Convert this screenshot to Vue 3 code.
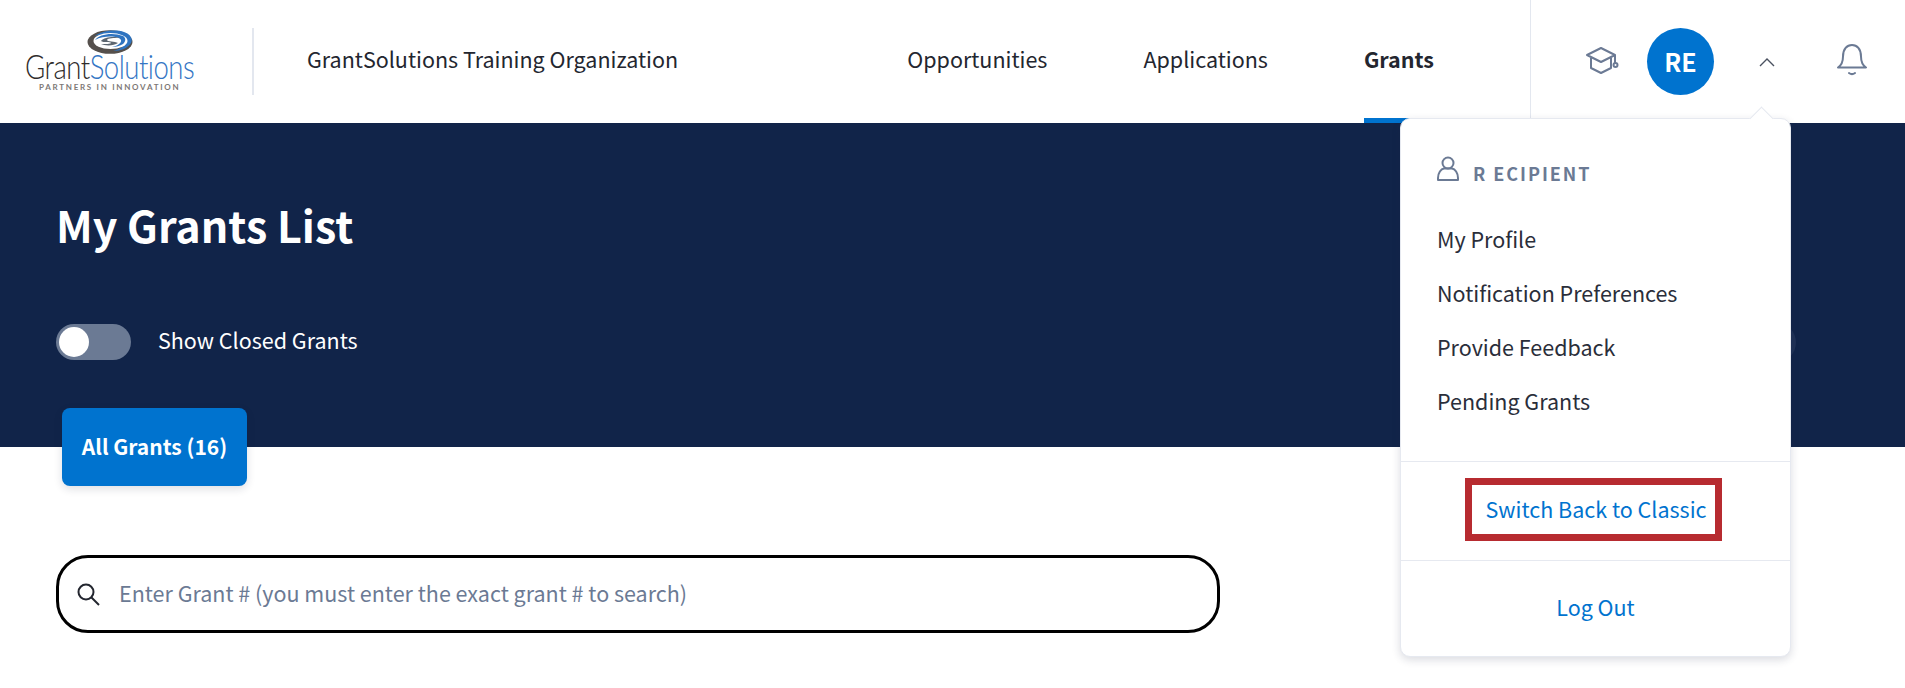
<script setup>
const navItems = [
  { label: 'Opportunities', active: false },
  { label: 'Applications', active: false },
  { label: 'Grants', active: true },
]
const menuItems = ['My Profile', 'Notification Preferences', 'Provide Feedback', 'Pending Grants']
</script>

<template>
  <div class="page">
    <header class="topbar">
      <div class="logo">
        <svg class="logo-mark" width="46" height="24" viewBox="0 0 46 24">
          <ellipse cx="23" cy="12" rx="22.500" ry="11.800" fill="#55504c" />
          <path d="M8 6C14 1 28-1 37 2c7 2.500 9 7 7 11-3 5-10 8-18 8 8-2 13-6 12-10C36 5 20 2 8 6z" fill="#2f74c0" />
          <ellipse cx="23.500" cy="11" rx="17" ry="8" fill="#fff" />
          <path d="M8 10C12 4 26 2 36 6c3 2 3 5 0 8-3 2-7 3-11 3 5-1 10-4 9-7C32 6 18 5 8 10z" fill="#2f74c0" />
          <path d="M14 11c3-4 14-5 18-3-5 0-11 0-12 2 0 2 8 1 11 3-4 3-13 3-17 1 4 0 10 0 10-1 0-2-8 0-10-2z" fill="#5c6670" />
        </svg>
        <div class="logo-word"><span class="lw-a">Grant</span><span class="lw-b">Solutions</span></div>
        <div class="logo-tag">PARTNERS IN INNOVATION</div>
      </div>
      <div class="org">GrantSolutions Training Organization</div>
      <nav class="nav">
        <a v-for="item in navItems" :key="item.label" class="nav-item" :class="{ active: item.active }">{{ item.label }}</a>
      </nav>
      <div class="tools">
        <svg class="cap" width="34" height="30" viewBox="0 0 34 30" fill="none" stroke="#6b7a94" stroke-width="2" stroke-linejoin="round">
          <path d="M2 10 16 3l14 7-14 7z" />
          <path d="M6 13v10l10 5 10-5V13" />
          <path d="M30 10v8" />
          <circle cx="30.500" cy="20" r="2" />
        </svg>
        <div class="avatar">RE</div>
        <svg class="chev" width="16" height="10" viewBox="0 0 16 10" fill="none" stroke="#4a5160" stroke-width="1.400"><path d="M1 9l7-7 7 7" /></svg>
        <svg class="bell" width="30" height="34" viewBox="0 0 30 34" fill="none" stroke="#6b7a94" stroke-width="2" stroke-linecap="round">
          <path d="M1 25.500c3-2 5-5 5-11C6 7 10 3 15 3s9 4 9 11.500c0 6 2 9 5 11z" stroke-linejoin="round" />
          <path d="M12 31c2 1.500 4 1.500 6 0" />
        </svg>
      </div>
    </header>

    <section class="hero">
      <h1 class="title">My Grants List</h1>
      <div class="toggle-row">
        <span class="switch"><span class="knob"></span></span>
        <span class="toggle-label">Show Closed Grants</span>
      </div>
      <div class="tab">All Grants (16)</div>
    </section>

    <section class="content">
      <div class="search">
        <svg width="24" height="24" viewBox="0 0 24 24" fill="none" stroke="#23262f" stroke-width="2"><circle cx="10" cy="10" r="7.500" /><path d="M15.500 15.500 23 23" /></svg>
        <span class="placeholder">Enter Grant # (you must enter the exact grant # to search)</span>
      </div>
    </section>

    <span class="ghost"></span>

    <div class="menu">
      <span class="arrow"></span>
      <div class="user">
        <svg class="user-icon" width="22" height="25" viewBox="0 0 22 25" fill="none" stroke="#6b7a94" stroke-width="2">
          <circle cx="11" cy="7" r="5.500" />
          <path d="M1 24v-2c0-5 3-9 6-9.500h8c3 .5 6 4.500 6 9.500v2z" stroke-linejoin="round" />
        </svg>
        <span class="user-name">R ECIPIENT</span>
      </div>
      <ul class="menu-list">
        <li v-for="m in menuItems" :key="m">{{ m }}</li>
      </ul>
      <div class="menu-sec classic">
        <a class="classic-link">Switch Back to Classic</a>
      </div>
      <div class="menu-sec logout"><a>Log Out</a></div>
    </div>
  </div>
</template>

<style>
html, body { margin: 0; background: #fff; }
</style>

<style scoped>
.page {
  position: relative;
  width: 1905px;
  height: 688px;
  overflow: hidden;
  font-family: "Noto Sans CJK SC", "Noto Sans", sans-serif;
  color: #23262f;
  background: #fff;
}
.topbar {
  height: 123px;
  display: flex;
  align-items: center;
}
.logo {
  position: relative;
  width: 252px;
  height: 67px;
  flex: none;
  border-right: 2px solid #e3e7ef;
}
.logo-mark { position: absolute; left: 87px; top: 2px; }
.logo-word {
  position: absolute;
  left: 25px;
  top: 25px;
  font-family: "Lato", sans-serif;
  font-weight: 300;
  font-size: 33px;
  line-height: 26px;
  letter-spacing: -.6px;
  white-space: nowrap;
  transform: scaleX(.835);
  transform-origin: left center;
}
.lw-a { color: #2f2c2b; }
.lw-b { color: #3375c4; }
.logo-tag {
  position: absolute;
  left: 39px;
  top: 54px;
  font-family: "Lato", sans-serif;
  font-weight: 700;
  font-size: 8px;
  line-height: 10px;
  letter-spacing: 1.720px;
  color: #7d7876;
  white-space: nowrap;
}
.org {
  margin-left: 53px;
  margin-top: -5px;
  font-size: 21.500px;
  line-height: 30px;
  white-space: nowrap;
  color: #23262f;
}
.nav {
  margin-left: auto;
  height: 123px;
  display: flex;
  gap: 96px;
  padding-right: 96px;
}
.nav-item {
  height: 123px;
  box-sizing: border-box;
  font-size: 21.500px;
  line-height: 117px;
  white-space: nowrap;
}
.nav-item.active {
  font-weight: 700;
  border-bottom: 5px solid #0073cf;
}
.tools {
  width: 375px;
  height: 123px;
  flex: none;
  box-sizing: border-box;
  border-left: 1px solid #e3e7ef;
  display: flex;
  align-items: center;
  padding-left: 54px;
}
.cap { flex: none; margin-top: -3px; }
.avatar {
  width: 67px;
  height: 67px;
  margin-left: 28px;
  flex: none;
  border-radius: 50%;
  background: #0073cf;
  color: #fff;
  font-size: 25px;
  font-weight: 700;
  line-height: 66px;
  text-align: center;
}
.chev { margin-left: 45px; flex: none; }
.bell { margin-left: 62px; flex: none; margin-top: -5px; }
.hero {
  height: 324px;
  background: #112449;
  position: relative;
  padding-left: 56px;
  display: flex;
  flex-direction: column;
  align-items: flex-start;
}
.title {
  margin: 72px 0 0;
  font-size: 43px;
  font-weight: 700;
  line-height: 58px;
  color: #fff;
  flex: none;
}
.toggle-row {
  margin-top: 71px;
  display: flex;
  align-items: center;
  height: 36px;
  flex: none;
}
.switch {
  width: 75px;
  height: 36px;
  border-radius: 18px;
  background: #6b7a94;
  display: block;
  position: relative;
}
.knob {
  position: absolute;
  left: 3px;
  top: 3px;
  width: 30px;
  height: 30px;
  border-radius: 50%;
  background: #fff;
}
.toggle-label {
  margin-left: 27px;
  margin-top: -5px;
  font-size: 21.500px;
  line-height: 30px;
  color: #fff;
}
.tab {
  flex: none;
  margin-top: 48px;
  margin-left: 6px;
  width: 185px;
  height: 78px;
  box-sizing: border-box;
  background: #0073cf;
  border-radius: 8px;
  color: #fff;
  font-size: 21px;
  font-weight: 700;
  line-height: 76px;
  text-align: center;
  box-shadow: 0 3px 8px rgba(20, 30, 60, .14);
  position: relative;
  z-index: 1;
  white-space: nowrap;
}
.content { padding: 108px 0 0 56px; }
.search {
  width: 1164px;
  height: 78px;
  box-sizing: border-box;
  border: 3px solid #000;
  border-radius: 32px;
  display: flex;
  align-items: center;
  padding-left: 17px;
}
.placeholder {
  margin-left: 19px;
  margin-top: -4px;
  font-size: 21.500px;
  color: #6b7a94;
  white-space: nowrap;
}
.ghost {
  position: absolute;
  left: 1755px;
  top: 322px;
  width: 41px;
  height: 41px;
  border-radius: 50%;
  background: #1f3155;
}
.menu {
  position: absolute;
  left: 1400px;
  top: 118px;
  width: 391px;
  height: 539px;
  box-sizing: border-box;
  background: #fff;
  border: 1px solid #e6e9f0;
  border-radius: 10px;
  box-shadow: 0 3px 8px rgba(30, 40, 70, .16);
  display: flex;
  flex-direction: column;
}
.arrow {
  position: absolute;
  left: 352px;
  top: -9px;
  width: 16px;
  height: 16px;
  background: #fff;
  border-top: 1px solid #e6e9f0;
  border-left: 1px solid #e6e9f0;
  transform: rotate(45deg);
}
.user {
  display: flex;
  align-items: flex-start;
  padding: 38px 0 0 36px;
  height: 33px;
}
.user-icon { margin-top: -1px; flex: none; }
.user-name {
  margin-left: 14px;
  font-size: 18px;
  font-weight: 700;
  line-height: 32px;
  letter-spacing: 1.950px;
  color: #6b7a94;
  white-space: nowrap;
}
.menu-list {
  list-style: none;
  margin: 0;
  padding: 22px 0 0 36px;
  height: 271px;
  box-sizing: border-box;
}
.menu-list li {
  font-size: 21.500px;
  height: 54px;
  line-height: 54px;
  color: #2a2e3a;
  white-space: nowrap;
}
.menu-sec {
  display: flex;
  justify-content: center;
  align-items: center;
  border-top: 1px solid #e6e9f0;
  color: #0073cf;
  font-size: 21.500px;
  white-space: nowrap;
}
.classic { height: 98px; }
.logout { flex: 1; padding-bottom: 4px; }
.classic-link {
  box-sizing: border-box;
  width: 257px;
  height: 63px;
  margin-left: -4px;
  margin-top: -4px;
  padding-left: 5px;
  border: 7px solid #b72b30;
  line-height: 47px;
  text-align: center;
}
</style>
